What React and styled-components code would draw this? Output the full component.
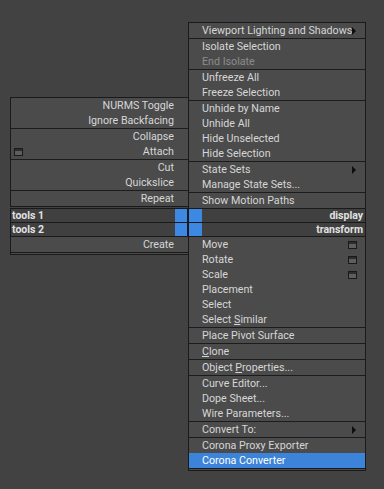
import React from "react";
import styled, { createGlobalStyle, css } from "styled-components";

const GlobalStyle = createGlobalStyle`
  html, body {
    margin: 0;
    height: 100%;
    background: #424242;
    overflow: hidden;
  }
  body {
    font-family: Roboto, "Liberation Sans", Arial, sans-serif;
    font-size: 10.7px;
  }
`;

const Quad = styled.div`
  display: grid;
  grid-template-columns: 178px 178px;
  grid-template-rows: auto 14px 14px auto;
  padding: 22px 0 0 10px;
`;

const Panel = styled.div`
  background: #4b4b4b;
  border: 1px solid #1a1a1a;
  ${(p) => p.$side === "left" && css`border-right: none;`}
  ${(p) => p.$top && css`border-bottom: none;`}
  ${(p) => p.$bottom && css`border-top-width: 1px; border-bottom: 3px double #1a1a1a;`}
  ${(p) => p.$side === "left" && p.$top && css`
    align-self: end;
    border-bottom: 1px solid #1a1a1a;
    margin-bottom: 1px;
  `}
  ${(p) => p.$side === "left" && p.$bottom && css`align-self: start;`}
`;

const Group = styled.div`
  & + & {
    border-top: 1px solid #1c1c1c;
  }
`;

const Item = styled.div`
  height: 15px;
  display: flex;
  align-items: center;
  padding: ${(p) => (p.$align === "right" ? "0 14px 0 3px" : "0 8px 0 13px")};
  color: ${(p) => (p.$disabled ? "#8b8b8b" : p.$active ? "#ffffff" : "#d6d6d6")};
  background: ${(p) => (p.$active ? "#3b84d9" : "transparent")};
  white-space: nowrap;
`;

const Label = styled.span`
  flex: 1;
  text-align: ${(p) => (p.$align === "right" ? "right" : "left")};
  line-height: 15px;
  u {
    text-decoration: underline;
    text-underline-offset: 1px;
  }
`;

const Arrow = styled.span`
  width: 0;
  height: 0;
  border-top: 4px solid transparent;
  border-bottom: 4px solid transparent;
  border-left: 4px solid #0e0e0e;
  margin-right: 1px;
`;

const OptionBox = styled.span`
  box-sizing: border-box;
  width: 9px;
  height: 8px;
  border: 1px solid #1a1a1a;
  background: linear-gradient(#2e2e2e 0 2px, #5e5e5e 2px);
`;

const Header = styled.div`
  display: flex;
  height: 13px;
  background: #404040;
  border-top: 1px solid #1a1a1a;
  color: #e2e2e2;
  font-weight: bold;
  font-size: 10.5px;
  ${(p) => p.$side === "left" ? css`border-left: 1px solid #1a1a1a;` : css`border-right: 1px solid #1a1a1a;`}
`;

const HeaderLabel = styled.span`
  flex: 1;
  line-height: 13px;
  padding: 0 2px 0 1px;
  text-align: ${(p) => (p.$side === "left" ? "left" : "right")};
`;

const Swatch = styled.span`
  width: ${(p) => (p.$side === "left" ? "12px" : "13px")};
  background: #3d88e3;
  ${(p) => p.$side === "left" ? css`border-right: 1px solid #1a1a1a;` : css`border-left: 1px solid #1a1a1a;`}
`;

const upperLeft = [
  [{ t: "NURMS Toggle" }, { t: "Ignore Backfacing" }],
  [{ t: "Collapse" }, { t: "Attach", box: true }],
  [{ t: "Cut" }, { t: "Quickslice" }],
  [{ t: "Repeat" }],
];

const upperRight = [
  [{ t: "Viewport Lighting and Shadows", sub: true }],
  [{ t: "Isolate Selection" }, { t: "End Isolate", disabled: true }],
  [{ t: "Unfreeze All" }, { t: "Freeze Selection" }],
  [{ t: "Unhide by Name" }, { t: "Unhide All" }, { t: "Hide Unselected" }, { t: "Hide Selection" }],
  [{ t: "State Sets", sub: true }, { t: "Manage State Sets..." }],
  [{ t: "Show Motion Paths" }],
];

const lowerLeft = [[{ t: "Create" }]];

const lowerRight = [
  [
    { t: "Move", box: true },
    { t: "Rotate", box: true },
    { t: "Scale", box: true },
    { t: "Placement" },
    { t: "Select" },
    { t: "Select ", u: "S", rest: "imilar" },
  ],
  [{ t: "Place Pivot Surface" }],
  [{ t: "", u: "C", rest: "lone" }],
  [{ t: "Object ", u: "P", rest: "roperties..." }],
  [{ t: "Curve Editor..." }, { t: "Dope Sheet..." }, { t: "Wire Parameters..." }],
  [{ t: "Convert To:", sub: true }],
  [{ t: "Corona Proxy Exporter" }, { t: "Corona Converter", active: true }],
];

function MenuItems({ groups, align }) {
  return groups.map((group, gi) => (
    <Group key={gi}>
      {group.map((it) => (
        <Item key={it.t + (it.rest || "")} $align={align} $disabled={it.disabled} $active={it.active}>
          {align === "right" && it.box && <OptionBox />}
          <Label $align={align}>
            {it.t}
            {it.u && <u>{it.u}</u>}
            {it.rest}
          </Label>
          {align !== "right" && it.box && <OptionBox />}
          {it.sub && <Arrow />}
        </Item>
      ))}
    </Group>
  ));
}

function HeaderRow({ side, label }) {
  return (
    <Header $side={side}>
      {side === "right" && <Swatch $side={side} />}
      <HeaderLabel $side={side}>{label}</HeaderLabel>
      {side === "left" && <Swatch $side={side} />}
    </Header>
  );
}

export default function App() {
  return (
    <>
      <GlobalStyle />
      <Quad>
        <Panel $side="left" $top>
          <MenuItems groups={upperLeft} align="right" />
        </Panel>
        <Panel $side="right" $top>
          <MenuItems groups={upperRight} align="left" />
        </Panel>

        <HeaderRow side="left" label="tools 1" />
        <HeaderRow side="right" label="display" />
        <HeaderRow side="left" label="tools 2" />
        <HeaderRow side="right" label="transform" />

        <Panel $side="left" $bottom>
          <MenuItems groups={lowerLeft} align="right" />
        </Panel>
        <Panel $side="right" $bottom>
          <MenuItems groups={lowerRight} align="left" />
        </Panel>
      </Quad>
    </>
  );
}
